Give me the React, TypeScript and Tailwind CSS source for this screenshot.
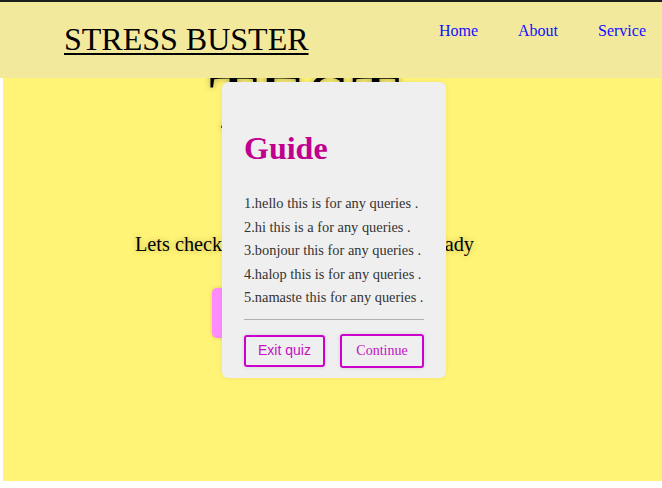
import React from "react";

const serif = { fontFamily: '"Liberation Serif", "Times New Roman", serif' };

export default function App() {
  const items = [
    "1.hello this is for any queries .",
    "2.hi this is a for any queries .",
    "3.bonjour this for any queries .",
    "4.halop this is for any queries .",
    "5.namaste this for any queries .",
  ];
  return (
    <div className="w-[662px] h-[488px] bg-white overflow-hidden relative" style={serif}>
      <div className="h-[2px] bg-[#1e1e1e]" />
      <header className="relative z-10 h-[76px] bg-[#f3e99d] flex items-start justify-between pl-[64px] pr-[16px]">
        <h1 className="mt-[19px] text-[32px] leading-[37px] text-black underline decoration-2 underline-offset-[3px]">
          STRESS BUSTER
        </h1>
        <nav className="mt-[19px] flex gap-[40px] text-[16px] leading-[20px] text-[#1010ff]">
          <a>Home</a>
          <a>About</a>
          <a>Service</a>
        </nav>
      </header>
      <main className="relative ml-[3px] w-[659px] h-[403px] bg-[#fff475]">
        <div className="flex flex-col items-center pr-[56px]">
          <div className="-mt-[17px] text-[80px] leading-none text-black [text-shadow:0_0_6px_rgba(0,0,0,0.35)]">
            TEST
          </div>
          <p className="mt-[92px] text-[20.3px] leading-[23px] text-black whitespace-nowrap [text-shadow:0_0_6px_rgba(0,0,0,0.25)]">
            Lets check your knowledge are you ready
          </p>
          <button className="mt-[32px] w-[186px] h-[50px] rounded-[5px] bg-[#ff8cff] [box-shadow:0_0_4px_rgba(0,0,0,0.15)]" />
        </div>
        <div className="absolute left-[219px] top-[4px] w-[224px] h-[296px] rounded-[6px] bg-[#efefef] px-[22px] pt-[48px] [box-shadow:0_0_4px_rgba(0,0,0,0.08)]">
          <h2 className="text-[32px] leading-[36px] font-bold text-[#c0008f]">Guide</h2>
          <ul className="mt-[26px] text-[14.4px] leading-[23.5px] text-[#333333]">
            {items.map((t) => (
              <li key={t} className="whitespace-nowrap">{t}</li>
            ))}
          </ul>
          <div className="mt-[9px] h-[1px] bg-[#b0b0b0]" />
          <div className="mt-[14px] flex justify-between items-start">
            <button
              className="w-[81px] h-[32px] mt-[1px] rounded-[3px] border-2 border-[#cc00cc] text-[14px] text-[#c411c4] [box-shadow:0_0_4px_rgba(0,0,0,0.12)]"
              style={{ fontFamily: '"Liberation Sans", Arial, sans-serif' }}
            >
              Exit quiz
            </button>
            <button className="w-[84px] h-[34px] rounded-[3px] border-2 border-[#cc00cc] text-[14px] text-[#c411c4] [box-shadow:0_0_4px_rgba(0,0,0,0.12)]">
              Continue
            </button>
          </div>
        </div>
      </main>
    </div>
  );
}
